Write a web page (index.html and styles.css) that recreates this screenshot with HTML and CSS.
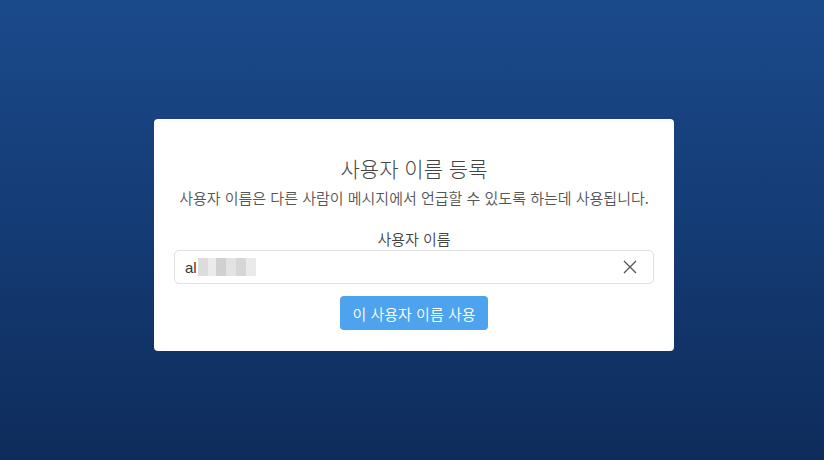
FILE: index.html
```html
<!DOCTYPE html>
<html lang="ko">
<head>
<meta charset="utf-8">
<link rel="stylesheet" href="styles.css">
</head>
<body>
<div class="page">
  <div class="card">
    <h1 class="title">사용자 이름 등록</h1>
    <p class="desc">사용자 이름은 다른 사람이 메시지에서 언급할 수 있도록 하는데 사용됩니다.</p>
    <label class="label">사용자 이름</label>
    <div class="field">
      <span class="value">al<span class="blur"></span></span>
      <svg class="clear" width="14" height="14" viewBox="0 0 14 14"><path d="M1 1L13 13M13 1L1 13" stroke="#555" stroke-width="1.3" fill="none"/></svg>
    </div>
    <button class="btn">이 사용자 이름 사용</button>
  </div>
</div>
</body>
</html>
```
FILE: styles.css
```css
html, body {
  margin: 0;
  padding: 0;
  height: 100%;
}
body {
  font-family: "Noto Sans CJK KR", "Noto Sans", sans-serif;
  background: linear-gradient(to bottom, #1b4a8b 0%, #143b74 50%, #0e2c5b 100%);
}
.page {
  height: 460px;
  display: flex;
  align-items: center;
  justify-content: center;
  padding: 10px 0 0 4px;
  box-sizing: border-box;
}
.card {
  width: 520px;
  height: 232px;
  box-sizing: border-box;
  background: #fff;
  border-radius: 4px;
  padding: 31px 20px 0;
  display: flex;
  flex-direction: column;
  align-items: center;
}
.title {
  margin: 0;
  font-size: 21px;
  font-weight: 300;
  color: #444;
  line-height: 36px;
}
.desc {
  margin: 1px 0 0;
  font-size: 15px;
  font-weight: 350;
  color: #555;
  line-height: 22px;
}
.label {
  margin-top: 20px;
  font-size: 15px;
  font-weight: 350;
  color: #444;
  line-height: 20px;
}
.field {
  align-self: stretch;
  height: 34px;
  box-sizing: border-box;
  border: 1px solid #e0e0e0;
  border-radius: 5px;
  margin-top: 1px;
  display: flex;
  align-items: center;
  justify-content: space-between;
  padding: 0 16px 0 10px;
}
.value {
  font-family: "Liberation Sans", sans-serif;
  font-size: 15px;
  color: #333;
  display: flex;
  align-items: center;
}
.blur {
  display: inline-block;
  width: 58px;
  height: 18px;
  margin-left: 1px;
  background:
    linear-gradient(to right, #d6d6d6 0 10px, #e8e8e8 10px 18px, #c8c8c8 18px 28px, #dedede 28px 38px, #cfcfcf 38px 48px, #e6e6e6 48px 58px);
  opacity: 0.85;
}
.clear {
  display: block;
}
.btn {
  margin-top: 12px;
  width: 148px;
  height: 34px;
  border: none;
  border-radius: 4px;
  background: #4ea3ee;
  color: #fff;
  font-family: "Noto Sans CJK KR", sans-serif;
  font-size: 15px;
  font-weight: 350;
  padding: 0;
}
```
